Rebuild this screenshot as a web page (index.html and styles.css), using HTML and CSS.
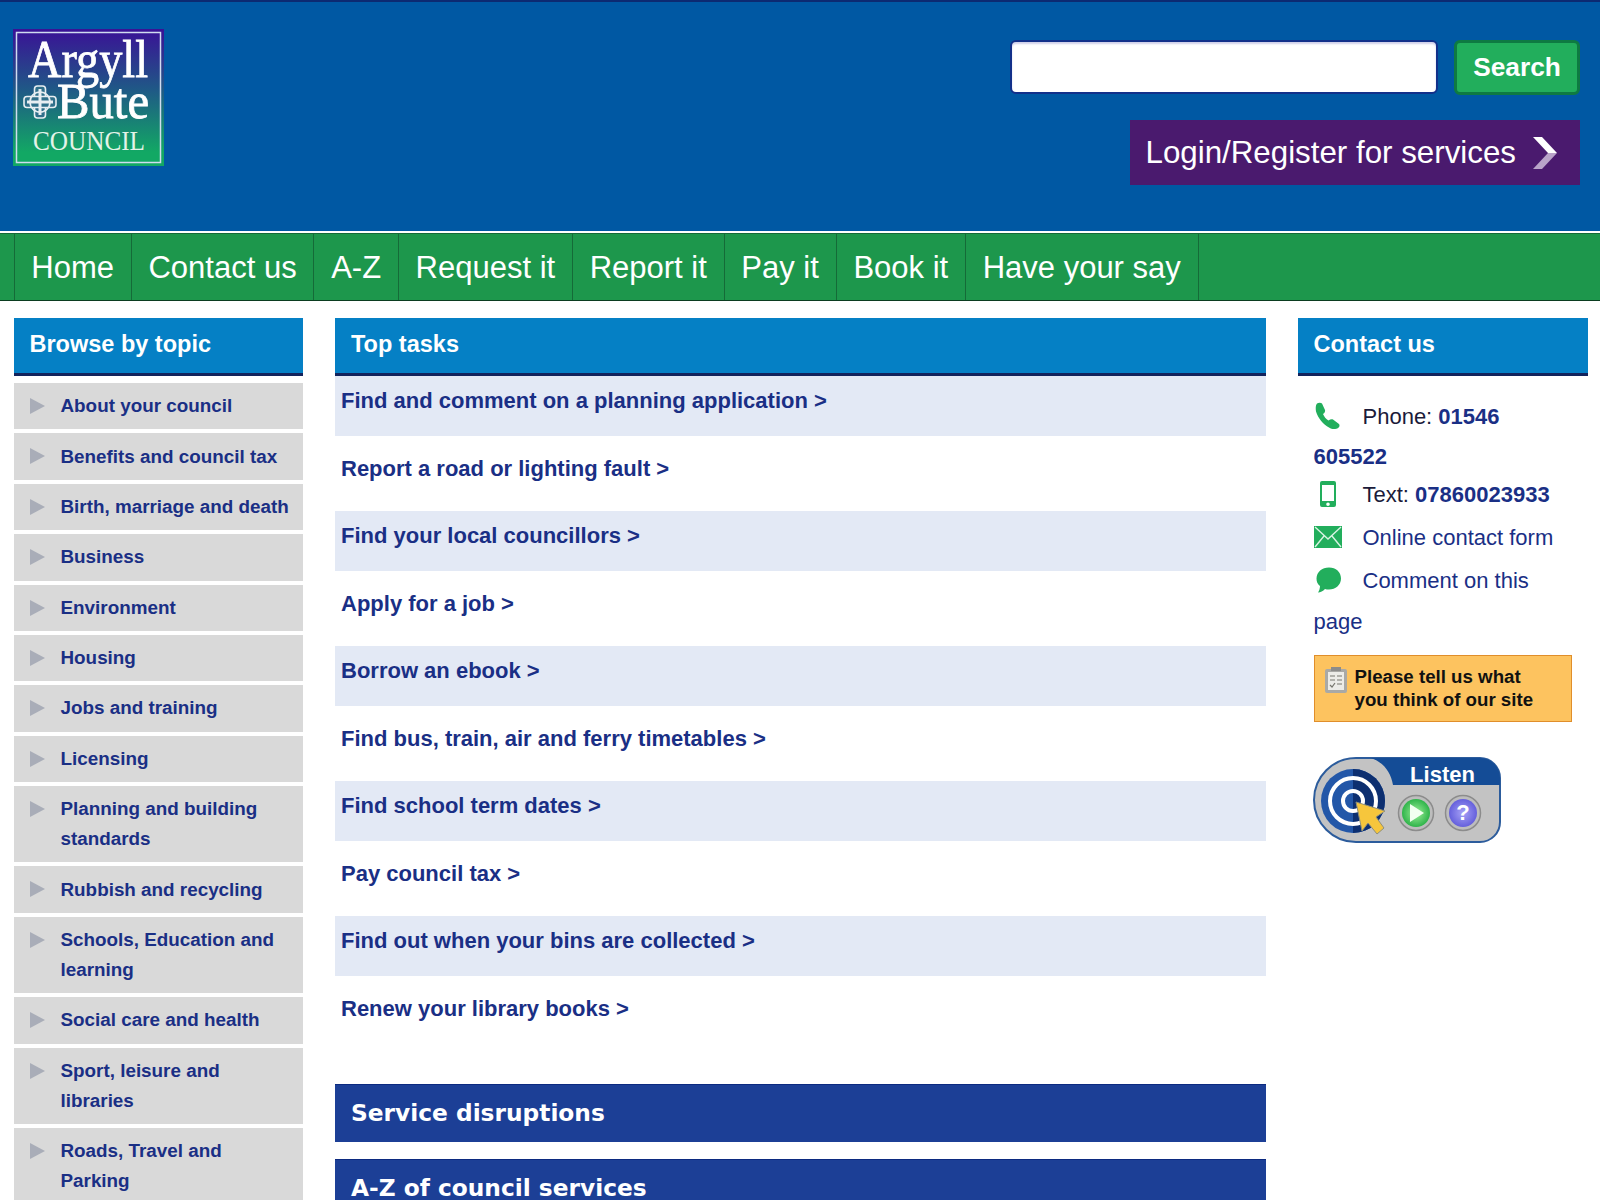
FILE: index.html
```html
<!DOCTYPE html>
<html lang="en">
<head>
	<meta charset="utf-8">
	<title>Argyll and Bute Council</title>
	<link rel="stylesheet" href="styles.css">
</head>

<body>
	<header id="masthead">
		<a class="logo" href="#">
			<svg width="151" height="137" viewBox="0 0 151 137">
				<defs>
					<linearGradient id="logoFill" x1="0" y1="0" x2="0" y2="1">
						<stop offset="0" stop-color="#3a1196"/>
						<stop offset="0.45" stop-color="#1f5a86"/>
						<stop offset="0.9" stop-color="#12a864"/>
					</linearGradient>
				</defs>
				<rect width="151" height="137" fill="url(#logoFill)"/>
				<rect x="3.500" y="3.500" width="144" height="130" fill="none" stroke="#cfdcf0" stroke-width="1.500"/>
				<text class="logo-big" x="15" y="48" textLength="120" lengthAdjust="spacingAndGlyphs">Argyll</text>
				<text class="logo-bute" x="44" y="88.500" textLength="92" lengthAdjust="spacingAndGlyphs">Bute</text>
				<text class="logo-small" x="20" y="121" textLength="112" lengthAdjust="spacingAndGlyphs">COUNCIL</text>
				<g transform="translate(27 73)" fill="#2f6f8a" stroke="#e8eef2" stroke-width="1.600">
					<rect x="-5.500" y="-16" width="11" height="32" rx="3"/>
					<rect x="-16" y="-5.500" width="32" height="11" rx="3"/>
					<circle r="10" fill="none"/>
					<path d="M0-13V13M-13 0H13" stroke-width="3"/>
				</g>
			</svg>
		</a>
		<div class="masthead-tools">
			<form class="search">
				<input class="search-box" type="text" aria-label="Search">
				<button class="search-btn" type="button">Search</button>
			</form>
			<a class="login" href="#">Login/Register for services
				<svg width="26" height="32" viewBox="0 0 26 32">
					<path d="M1 0h9l15 16H16z" fill="#fff"/>
					<path d="M25 16L10 32H1l15-16z" fill="#b9a3c9"/>
				</svg>
			</a>
		</div>
	</header>

	<nav id="mainnav">
		<a href="#">Home</a>
		<a href="#">Contact us</a>
		<a href="#">A-Z</a>
		<a href="#">Request it</a>
		<a href="#">Report it</a>
		<a href="#">Pay it</a>
		<a href="#">Book it</a>
		<a href="#">Have your say</a>
	</nav>

	<div id="columns">
		<aside class="col-left">
			<h2 class="panel-title">Browse by topic</h2>
			<ul class="topics">
				<li><a href="#">About your council</a></li>
				<li><a href="#">Benefits and council tax</a></li>
				<li><a href="#">Birth, marriage and death</a></li>
				<li><a href="#">Business</a></li>
				<li><a href="#">Environment</a></li>
				<li><a href="#">Housing</a></li>
				<li><a href="#">Jobs and training</a></li>
				<li><a href="#">Licensing</a></li>
				<li><a href="#">Planning and building standards</a></li>
				<li><a href="#">Rubbish and recycling</a></li>
				<li><a href="#">Schools, Education and learning</a></li>
				<li><a href="#">Social care and health</a></li>
				<li><a href="#">Sport, leisure and libraries</a></li>
				<li><a href="#">Roads, Travel and Parking</a></li>
			</ul>
		</aside>

		<main class="col-main">
			<h2 class="panel-title">Top tasks</h2>
			<ul class="tasks">
				<li><a href="#">Find and comment on a planning application &gt;</a></li>
				<li><a href="#">Report a road or lighting fault &gt;</a></li>
				<li><a href="#">Find your local councillors &gt;</a></li>
				<li><a href="#">Apply for a job &gt;</a></li>
				<li><a href="#">Borrow an ebook &gt;</a></li>
				<li><a href="#">Find bus, train, air and ferry timetables &gt;</a></li>
				<li><a href="#">Find school term dates &gt;</a></li>
				<li><a href="#">Pay council tax &gt;</a></li>
				<li><a href="#">Find out when your bins are collected &gt;</a></li>
				<li><a href="#">Renew your library books &gt;</a></li>
			</ul>
			<h2 class="band">Service disruptions</h2>
			<h2 class="band">A-Z of council services</h2>
		</main>

		<aside class="col-right">
			<h2 class="panel-title">Contact us</h2>
			<div class="contact">
				<p class="contact-line phone">
					<svg class="ico" width="28" height="28" viewBox="0 0 28 28">
						<path d="M3 1.500C4.500.5 7 .5 8 1.500l3 6.500c.5 1.500-.5 3-2 4 1 2.500 3 5 5.500 6.500 1.500-1 3-1.500 4.500-1l6 4.500c1 1.500.5 3-1 4s-5.500 2-9-.5C9.500 23 4 16 2 9.500c-.5-3-.5-6.500 1-8z" fill="#22ae5c"/>
					</svg>Phone: <a href="#"><b>01546 605522</b></a>
				</p>
				<p class="contact-line">
					<svg class="ico" width="28" height="28" viewBox="0 0 28 28">
						<path fill-rule="evenodd" d="M8 1h12a2 2 0 0 1 2 2v22a2 2 0 0 1-2 2H8a2 2 0 0 1-2-2V3a2 2 0 0 1 2-2zm0 4v16h12V5zm6 17.500a1.800 1.800 0 1 0 0 3.600 1.800 1.800 0 0 0 0-3.600z" fill="#22ae5c"/>
					</svg>Text: <a href="#"><b>07860023933</b></a>
				</p>
				<p class="contact-line online">
					<svg class="ico" width="28" height="28" viewBox="0 0 28 28">
						<rect y="3" width="28" height="22" fill="#22ae5c"/>
						<path d="M1 4l13 12L27 4M1 24l9-11M27 24l-9-11" fill="none" stroke="#d9f3e3" stroke-width="1.400"/>
					</svg><a href="#">Online contact form</a>
				</p>
				<p class="contact-line comment">
					<svg class="ico" width="28" height="28" viewBox="0 0 28 28">
						<path d="M15 1.500c7 0 12 4.500 12 11s-5.500 11-12 11c-1.500 0-3-.2-4-.6C9 25 6.500 26.500 4 26.500c1-1.500 2-4 2-6.500C3.500 18 2.500 15.500 2.500 12.500 2.500 6 8 1.500 15 1.500z" fill="#22ae5c"/>
					</svg><a href="#">Comment on this page</a>
				</p>
			</div>
			<a class="feedback" href="#">
				<svg class="feedback-ico" width="22" height="26" viewBox="0 0 22 26">
					<rect y="2" width="22" height="24" rx="2" fill="#a9a9a6"/>
					<rect x="3" y="5" width="16" height="18" fill="#ecece8"/>
					<rect x="6" width="10" height="4" fill="#8c8c8a"/>
					<path d="M5 18l2 2 3-4M12 9h5M12 13h5M12 17h5M5 9h5M5 13h5" fill="none" stroke="#77776f" stroke-width="1.200"/>
				</svg>
				<span>Please tell us what<br>you think of our site</span>
			</a>
			<a class="listen" href="#">
				<svg width="188" height="87" viewBox="0 0 188 87">
					<defs>
						<radialGradient id="playFill"><stop offset="0" stop-color="#9ff09a"/><stop offset="1" stop-color="#2fb44a"/></radialGradient>
						<radialGradient id="helpFill"><stop offset="0" stop-color="#a7a2f6"/><stop offset="1" stop-color="#6560dc"/></radialGradient>
					</defs>
					<path d="M43 2h124a20 20 0 0 1 20 20v44a20 20 0 0 1-20 20H43a42 42 0 0 1 0-84z" fill="#c3c3c3" stroke="#2c5c9c" stroke-width="2"/>
					<path d="M58 2h109a20 20 0 0 1 20 20v7H80C78 16 70 6 58 2z" fill="#144c96"/>
					<circle cx="40" cy="45" r="32" fill="#2357a8"/>
					<path d="M40 13a32 32 0 0 1 0 64z" fill="#0d2f70"/>
					<circle cx="40" cy="45" r="23" fill="none" stroke="#fff" stroke-width="4"/>
					<circle cx="40" cy="45" r="10" fill="none" stroke="#fff" stroke-width="4"/>
					<path d="M43 46l29 9-9 6 8 11-7 6-9-11-6 8z" fill="#f6c63c" stroke="#8f8f7a" stroke-width="1"/>
					<text class="listen-text" x="129.500" y="26" text-anchor="middle">Listen</text>
					<circle cx="103" cy="57" r="17.500" fill="#bdbdbd" stroke="#8c8c8c" stroke-width="1.500"/>
					<circle cx="103" cy="57" r="14" fill="url(#playFill)"/>
					<path d="M97 48l14 9-14 9z" fill="#f2fff0"/>
					<circle cx="150" cy="57" r="17.500" fill="#bdbdbd" stroke="#8c8c8c" stroke-width="1.500"/>
					<circle cx="150" cy="57" r="14" fill="url(#helpFill)"/>
					<text class="listen-help" x="150" y="64" text-anchor="middle">?</text>
				</svg>
			</a>
		</aside>
	</div>
</body>

</html>
```

FILE: styles.css
```css
html {
	box-sizing: border-box;
}
*,
*::before,
*::after {
	box-sizing: inherit;
}

html,
body {
	height: 1200px;
	overflow: hidden;
}

body {
	background-color: #fff;
	color: #1b1b3a;
	font-family: "Liberation Sans", Arial, sans-serif;
	margin: 0;
	padding: 0;
}

a {
	color: #1a2f85;
	text-decoration: none;
}

h2,
p,
ul {
	margin: 0;
	padding: 0;
}

ul {
	list-style: none;
}

#masthead {
	background-color: #0058a3;
	border-top: 2px solid #0c2a72;
	display: flex;
	height: 231px;
	justify-content: space-between;
	padding: 27px 20px 0 13px;
}

.logo {
	display: block;
	height: 137px;
}

.logo-big,
.logo-bute {
	fill: #fff;
	font-family: "Liberation Serif", serif;
	font-size: 52px;
	stroke: #fff;
	stroke-width: 0.8px;
}

.logo-bute {
	font-size: 50px;
}

.logo-small {
	fill: #e3f3e8;
	font-family: "Liberation Serif", serif;
	font-size: 28px;
}

.masthead-tools {
	align-items: flex-end;
	display: flex;
	flex-direction: column;
	gap: 25px;
	padding-top: 11px;
}

.search {
	align-items: flex-start;
	display: flex;
	gap: 16px;
}

.search-box {
	background-color: #fff;
	border: 2px solid #12308a;
	border-radius: 6px;
	box-shadow: inset 0 2px 2px #d0d0ea;
	height: 54px;
	width: 428px;
}

.search-btn {
	background-color: #22ae5c;
	border: 3px solid #0e7a42;
	border-radius: 6px;
	color: #fff;
	font-family: inherit;
	font-size: 26.300px;
	font-weight: bold;
	height: 55px;
	padding: 0;
	width: 126px;
}

.login {
	align-items: center;
	background-color: #4a1a6e;
	color: #fff;
	display: flex;
	font-size: 31.300px;
	gap: 16px;
	height: 65px;
	padding: 0 22px 0 15px;
}

#mainnav {
	background-color: #1d974c;
	border-bottom: 1px solid #0b3d20;
	border-top: 2px solid #fff;
	box-shadow: inset 0 1px 0 #156b38;
	display: flex;
	height: 70px;
	padding-left: 13.500px;
}

#mainnav a {
	border-left: 1px solid #156b38;
	color: #fff;
	font-size: 31px;
	line-height: 69px;
	padding: 0 16.750px;
}

#mainnav a:last-child {
	border-right: 1px solid #156b38;
}

#columns {
	display: flex;
	gap: 32px;
	padding: 17px 13px 0 13.500px;
}

.col-left {
	flex: 0 0 289.500px;
}

.col-main {
	flex: 0 0 930.500px;
}

.col-right {
	flex: 0 0 289px;
}

.panel-title {
	background-color: #0580c5;
	border-bottom: 3px solid #13235c;
	color: #fff;
	font-size: 23.500px;
	height: 58px;
	line-height: 52px;
	padding-left: 16px;
}

.topics {
	display: flex;
	flex-direction: column;
	gap: 4px;
	padding-top: 7px;
}

.topics li {
	background-color: #d9d9d9;
	padding: 8.200px 8px 8.200px 47px;
	position: relative;
}

.topics li::before {
	border-bottom: 8px solid transparent;
	border-left: 15px solid #a9adb8;
	border-top: 8px solid transparent;
	content: "";
	left: 16px;
	position: absolute;
	top: 15px;
}

.topics a {
	display: block;
	font-size: 18.850px;
	font-weight: bold;
	line-height: 30px;
}

.tasks {
	display: flex;
	flex-direction: column;
	gap: 8px;
	margin-bottom: 40.500px;
}

.tasks li {
	height: 59.500px;
	padding: 11px 6px 0;
}

.tasks li:nth-child(odd) {
	background-color: #e3e9f5;
}

.tasks a {
	font-size: 22px;
	font-weight: bold;
	line-height: 28px;
}

.band {
	background-color: #1c3f96;
	border-top: 1px solid #0c2a80;
	color: #fff;
	font-family: "DejaVu Sans", Verdana, sans-serif;
	font-size: 23.300px;
	height: 58px;
	line-height: 56px;
	margin-bottom: 17px;
	padding-left: 16px;
}

.contact {
	padding: 20.500px 16px 0;
}

.contact-line {
	font-size: 22px;
	line-height: 40px;
	margin-bottom: 3px;
}

.contact-line.phone {
	margin-bottom: -2px;
}

.contact-line.online {
	margin-bottom: 2px;
}

.contact-line.comment {
	line-height: 41px;
}

.ico {
	margin-right: 21px;
	vertical-align: -6px;
}

.feedback {
	align-items: flex-start;
	background-color: #fdc35f;
	border: 1px solid #e08e2b;
	color: #111;
	display: flex;
	font-size: 18.700px;
	font-weight: bold;
	gap: 8px;
	height: 67px;
	line-height: 23px;
	margin: 13.500px 16px 0;
	padding: 9px 10px 0;
	width: 258px;
}

.feedback-ico {
	flex: none;
	margin-top: 2px;
}

.listen {
	display: block;
	margin: 34px 0 0 15px;
}

.listen-text {
	fill: #fff;
	font-size: 22px;
	font-weight: bold;
}

.listen-help {
	fill: #fff;
	font-size: 22px;
	font-weight: bold;
}
```
